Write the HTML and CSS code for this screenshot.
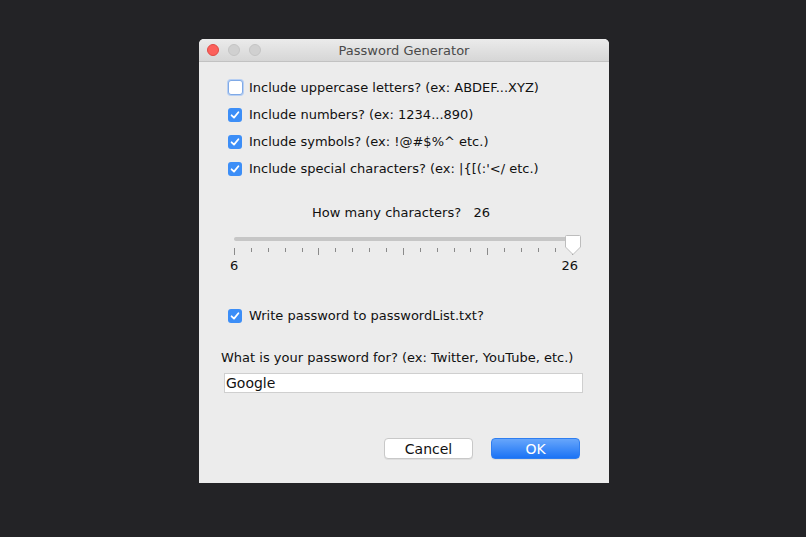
FILE: index.html
```html
<!DOCTYPE html>
<html lang="en">
  <head>
    <meta charset="UTF-8" />
    <meta name="viewport" content="width=device-width, initial-scale=1.0" />
    <title>Password Generator</title>
    <link rel="stylesheet" href="styles.css">
  </head>
  <body>
    <div class="window">
      <div class="titlebar">
        <div class="lights">
          <span class="light close"></span>
          <span class="light"></span>
          <span class="light"></span>
        </div>
        <div class="title">Password Generator</div>
      </div>

      <div class="content">
        <ul class="options">
          <li><span class="box"></span>Include uppercase letters? (ex: ABDEF...XYZ)</li>
          <li><span class="box checked"></span>Include numbers? (ex: 1234...890)</li>
          <li><span class="box checked"></span>Include symbols? (ex: !@#$%^ etc.)</li>
          <li><span class="box checked"></span>Include special characters? (ex: |{[(:'&lt;/ etc.)</li>
        </ul>

        <div class="length">How many characters? &nbsp; 26</div>

        <div class="slider">
          <div class="track"></div>
          <div class="thumb">
            <svg width="18" height="22" viewBox="0 0 18 22">
              <path d="M2.5 1.5 H15.5 Q16.5 1.5 16.5 2.5 V13 L9 20.5 L1.5 13 V2.5 Q1.5 1.5 2.5 1.5 Z" fill="#fff" stroke="#bdbdbd" stroke-width="1"/>
            </svg>
          </div>
          <div class="ticks">
            <span class="major"></span><span></span><span></span><span></span><span></span>
            <span class="major"></span><span></span><span></span><span></span><span></span>
            <span class="major"></span><span></span><span></span><span></span><span></span>
            <span class="major"></span><span></span><span></span><span></span><span></span>
            <span class="major"></span>
          </div>
          <div class="ends">
            <span>6</span>
            <span>26</span>
          </div>
        </div>

        <div class="option write"><span class="box checked"></span>Write password to passwordList.txt?</div>

        <div class="field-label">What is your password for? (ex: Twitter, YouTube, etc.)</div>
        <div class="field">Google</div>

        <div class="buttons">
          <button class="btn">Cancel</button>
          <button class="btn primary">OK</button>
        </div>
      </div>
    </div>
  </body>
</html>
```

FILE: styles.css
```css
* {
  margin: 0;
  padding: 0;
  box-sizing: border-box;
}

html,
body {
  height: 100%;
}

body {
  background: #232326;
  font-family: "DejaVu Sans", Verdana, sans-serif;
  font-size: 13px;
  color: #111;
  padding-top: 39px;
}

ul {
  list-style: none;
}

.window {
  width: 410px;
  height: 444px;
  margin-left: 199px;
  background: #ececec;
  border-radius: 5px 5px 0 0;
  overflow: hidden;
}

/* title bar with the three traffic lights */
.titlebar {
  height: 23px;
  background: linear-gradient(#ebebeb, #d6d6d6);
  border-bottom: 1px solid #c2c2c2;
  position: relative;
  display: flex;
  align-items: center;
  justify-content: center;
}

.lights {
  position: absolute;
  left: 8px;
  top: 5px;
  display: flex;
  gap: 9px;
}

.light {
  width: 12px;
  height: 12px;
  border-radius: 50%;
  background: #d0d0d0;
  border: 1px solid #c4c4c4;
}

.light.close {
  background: #fc605b;
  border-color: #de4a45;
}

.title {
  color: #4a4a4a;
  font-size: 13px;
}

.content {
  padding: 12px 25px 0 25px;
}

.options li,
.option {
  display: flex;
  align-items: center;
  height: 27px;
  padding-left: 4px;
}

/* checkboxes */
.box {
  width: 14px;
  height: 14px;
  border-radius: 3px;
  border: 1px solid #a9a9a9;
  background: #fff;
  margin-right: 7px;
  flex-shrink: 0;
}

.options li:first-child .box {
  width: 15px;
  height: 15px;
  margin-right: 6px;
  border: 1px solid #7fa9e6;
  box-shadow: 0 0 0 1px #b7cff3;
}

.box.checked {
  border: none;
  background: #3c8ef7 no-repeat center / 10px 10px url("data:image/svg+xml,%3Csvg xmlns='http://www.w3.org/2000/svg' viewBox='0 0 10 10'%3E%3Cpath d='M1.6 5.3 L4 7.6 L8.4 2.2' fill='none' stroke='white' stroke-width='1.8' stroke-linecap='round' stroke-linejoin='round'/%3E%3C/svg%3E");
}

.length {
  text-align: center;
  margin-top: 23px;
  margin-left: -6px;
}

/* slider with tick marks */
.slider {
  position: relative;
  margin: 17px 11px 0 10px;
  width: 339px;
}

.track {
  height: 4px;
  margin-top: 7px;
  border-radius: 2px;
  background: #c6c6c6;
}

.thumb {
  position: absolute;
  right: -9px;
  top: -3px;
  line-height: 0;
  z-index: 1;
}

.ticks {
  display: flex;
  justify-content: space-between;
  align-items: flex-start;
  margin-top: 7px;
}

.ticks span {
  width: 1px;
  height: 4px;
  background: #8a8a8a;
}

.ticks span.major {
  height: 7px;
}

.ends {
  display: flex;
  justify-content: space-between;
  margin: 3px -5px 0 -4px;
  font-size: 13px;
}

.write {
  margin-top: 29px;
}

.field-label {
  margin-top: 21px;
  margin-left: -3px;
}

.field {
  margin-top: 8px;
  width: 359px;
  height: 20px;
  background: #fff;
  border: 1px solid #cfcfcf;
  padding: 1px 1px;
  line-height: 17px;
  font-size: 14px;
}

.buttons {
  display: flex;
  justify-content: flex-end;
  gap: 18px;
  margin-top: 45px;
  padding-right: 4px;
}

.btn {
  width: 89px;
  height: 21px;
  border-radius: 4px;
  border: 1px solid #c8c8c8;
  background: #fff;
  font-family: inherit;
  font-size: 14px;
  color: #111;
  box-shadow: 0 1px 0 rgba(0, 0, 0, 0.06);
}

.btn.primary {
  border-color: #2f7ef0;
  background: linear-gradient(#67a6fb, #1b73f5);
  color: #fff;
}
```
